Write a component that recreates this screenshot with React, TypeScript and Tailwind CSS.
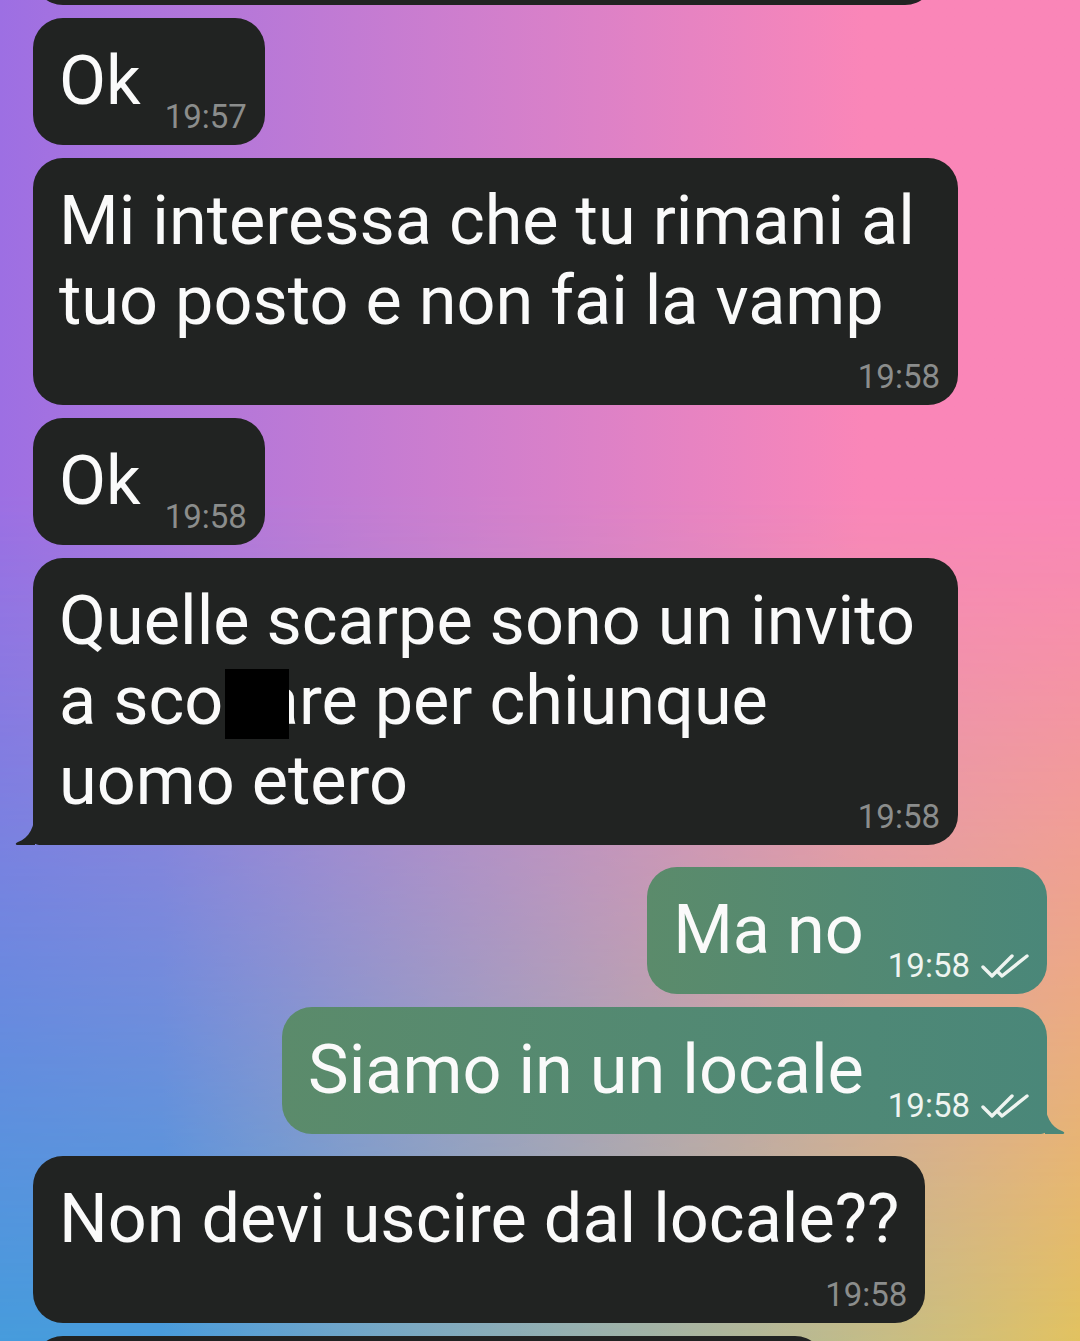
import React from 'react';

type Msg = {
  id: number;
  side: 'in' | 'out';
  lines: React.ReactNode[];
  time: string;
  layout: 'inline' | 'below' | 'overlap';
  wide?: boolean;
  tail?: boolean;
};

const messages: Msg[] = [
  { id: 1, side: 'in', lines: ['Ok'], time: '19:57', layout: 'inline' },
  {
    id: 2,
    side: 'in',
    lines: ['Mi interessa che tu rimani al', 'tuo posto e non fai la vamp'],
    time: '19:58',
    layout: 'below',
    wide: true,
  },
  { id: 3, side: 'in', lines: ['Ok'], time: '19:58', layout: 'inline' },
  {
    id: 4,
    side: 'in',
    lines: [
      'Quelle scarpe sono un invito',
      <>
        a sco
        <span className="relative">
          pa
          {/* redacted */}
          <span className="absolute left-[2px] top-[8px] h-[70px] w-[64px] bg-black" />
        </span>
        re per chiunque
      </>,
      'uomo etero',
    ],
    time: '19:58',
    layout: 'overlap',
    wide: true,
    tail: true,
  },
  { id: 5, side: 'out', lines: ['Ma no'], time: '19:58', layout: 'inline' },
  { id: 6, side: 'out', lines: ['Siamo in un locale'], time: '19:58', layout: 'inline', tail: true },
  { id: 7, side: 'in', lines: ['Non devi uscire dal locale??'], time: '19:58', layout: 'below' },
];

function DoubleCheck() {
  return (
    <svg width="48" height="26" viewBox="0 0 48 26" fill="none" className="mb-[6px] shrink-0">
      <path d="M2 13 L11 22 L31 2" stroke="#eef4f0" strokeWidth="3.4" strokeLinecap="round" strokeLinejoin="round" />
      <path d="M17 18 L21 22 L46 2" stroke="#eef4f0" strokeWidth="3.4" strokeLinecap="round" strokeLinejoin="round" />
    </svg>
  );
}

function Time({ msg }: { msg: Msg }) {
  const out = msg.side === 'out';
  return (
    <div className="flex shrink-0 items-end gap-[11px]">
      <span className={`whitespace-nowrap text-[33px] leading-[40px] ${out ? 'text-[#eef4f0]' : 'text-[#8b8d8c]'}`}>
        {msg.time}
      </span>
      {out && <DoubleCheck />}
    </div>
  );
}

function Tail({ side }: { side: 'in' | 'out' }) {
  if (side === 'in') {
    return (
      <svg width="20" height="34" viewBox="0 0 20 34" className="absolute bottom-0 left-[-18px]">
        <path d="M20 0 C20 16 14 27 3 31 C0 32 0 34 3 34 L20 34 Z" fill="#212322" />
      </svg>
    );
  }
  return (
    <svg width="20" height="34" viewBox="0 0 20 34" className="absolute bottom-0 right-[-18px]">
      <path d="M0 0 C0 16 6 27 17 31 C20 32 20 34 17 34 L0 34 Z" fill="#4a8779" />
    </svg>
  );
}

function Bubble({ msg }: { msg: Msg }) {
  const out = msg.side === 'out';
  const text = (
    <div className={`pr-[8px] ${msg.layout === 'inline' ? 'mb-[16px]' : ''}`}>
      {msg.lines.map((line, i) => (
        <div key={i} className="whitespace-nowrap">
          {line}
        </div>
      ))}
    </div>
  );

  return (
    <div
      className={`relative rounded-[30px] pb-[8px] pl-[26px] pr-[18px] pt-[23px] text-[68.4px] leading-[80px] text-[#fafafa] ${
        out
          ? 'mr-[33px] self-end bg-linear-to-r from-[#5b8b6b] to-[#4a8779]'
          : 'ml-[33px] self-start bg-[#212322]'
      } ${msg.wide ? 'w-[925px]' : ''} ${msg.tail ? (out ? 'rounded-br-[6px]' : 'rounded-bl-[6px]') : ''}`}
    >
      {msg.layout === 'inline' && (
        <div className="flex items-end gap-[16px]">
          {text}
          <Time msg={msg} />
        </div>
      )}
      {msg.layout === 'below' && (
        <>
          {text}
          <div className="mt-[16px] flex justify-end">
            <Time msg={msg} />
          </div>
        </>
      )}
      {msg.layout === 'overlap' && (
        <>
          {text}
          <div className="mt-[-24px] flex justify-end">
            <Time msg={msg} />
          </div>
        </>
      )}
      {msg.tail && <Tail side={msg.side} />}
    </div>
  );
}

export default function App() {
  return (
    <div className="grid h-[1341px] w-[1080px] overflow-hidden bg-linear-to-r from-[#3fa0dc] from-15% to-[#e0c858] font-[Roboto,sans-serif]">
      <div className="[grid-area:1/1] bg-linear-to-r from-[#9d6fe3] to-[#fa86b8] to-80% [mask-image:linear-gradient(to_bottom,black_35%,transparent_100%)]" />
      <div className="relative [grid-area:1/1] flex flex-col gap-[13px]">
        {/* previous message, mostly scrolled out */}
        <div className="ml-[33px] mt-[-55px] h-[60px] w-[902px] shrink-0 rounded-[30px] bg-[#212322]" />
        {messages.map((m, i) => {
          const prev = messages[i - 1];
          const switched = prev && prev.side !== m.side;
          return (
            <div key={m.id} className={`flex flex-col ${switched ? 'mt-[9px]' : ''}`}>
              <Bubble msg={m} />
            </div>
          );
        })}
        <div className="ml-[33px] h-[80px] w-[792px] shrink-0 rounded-[30px] bg-[#212322]" />
      </div>
    </div>
  );
}
